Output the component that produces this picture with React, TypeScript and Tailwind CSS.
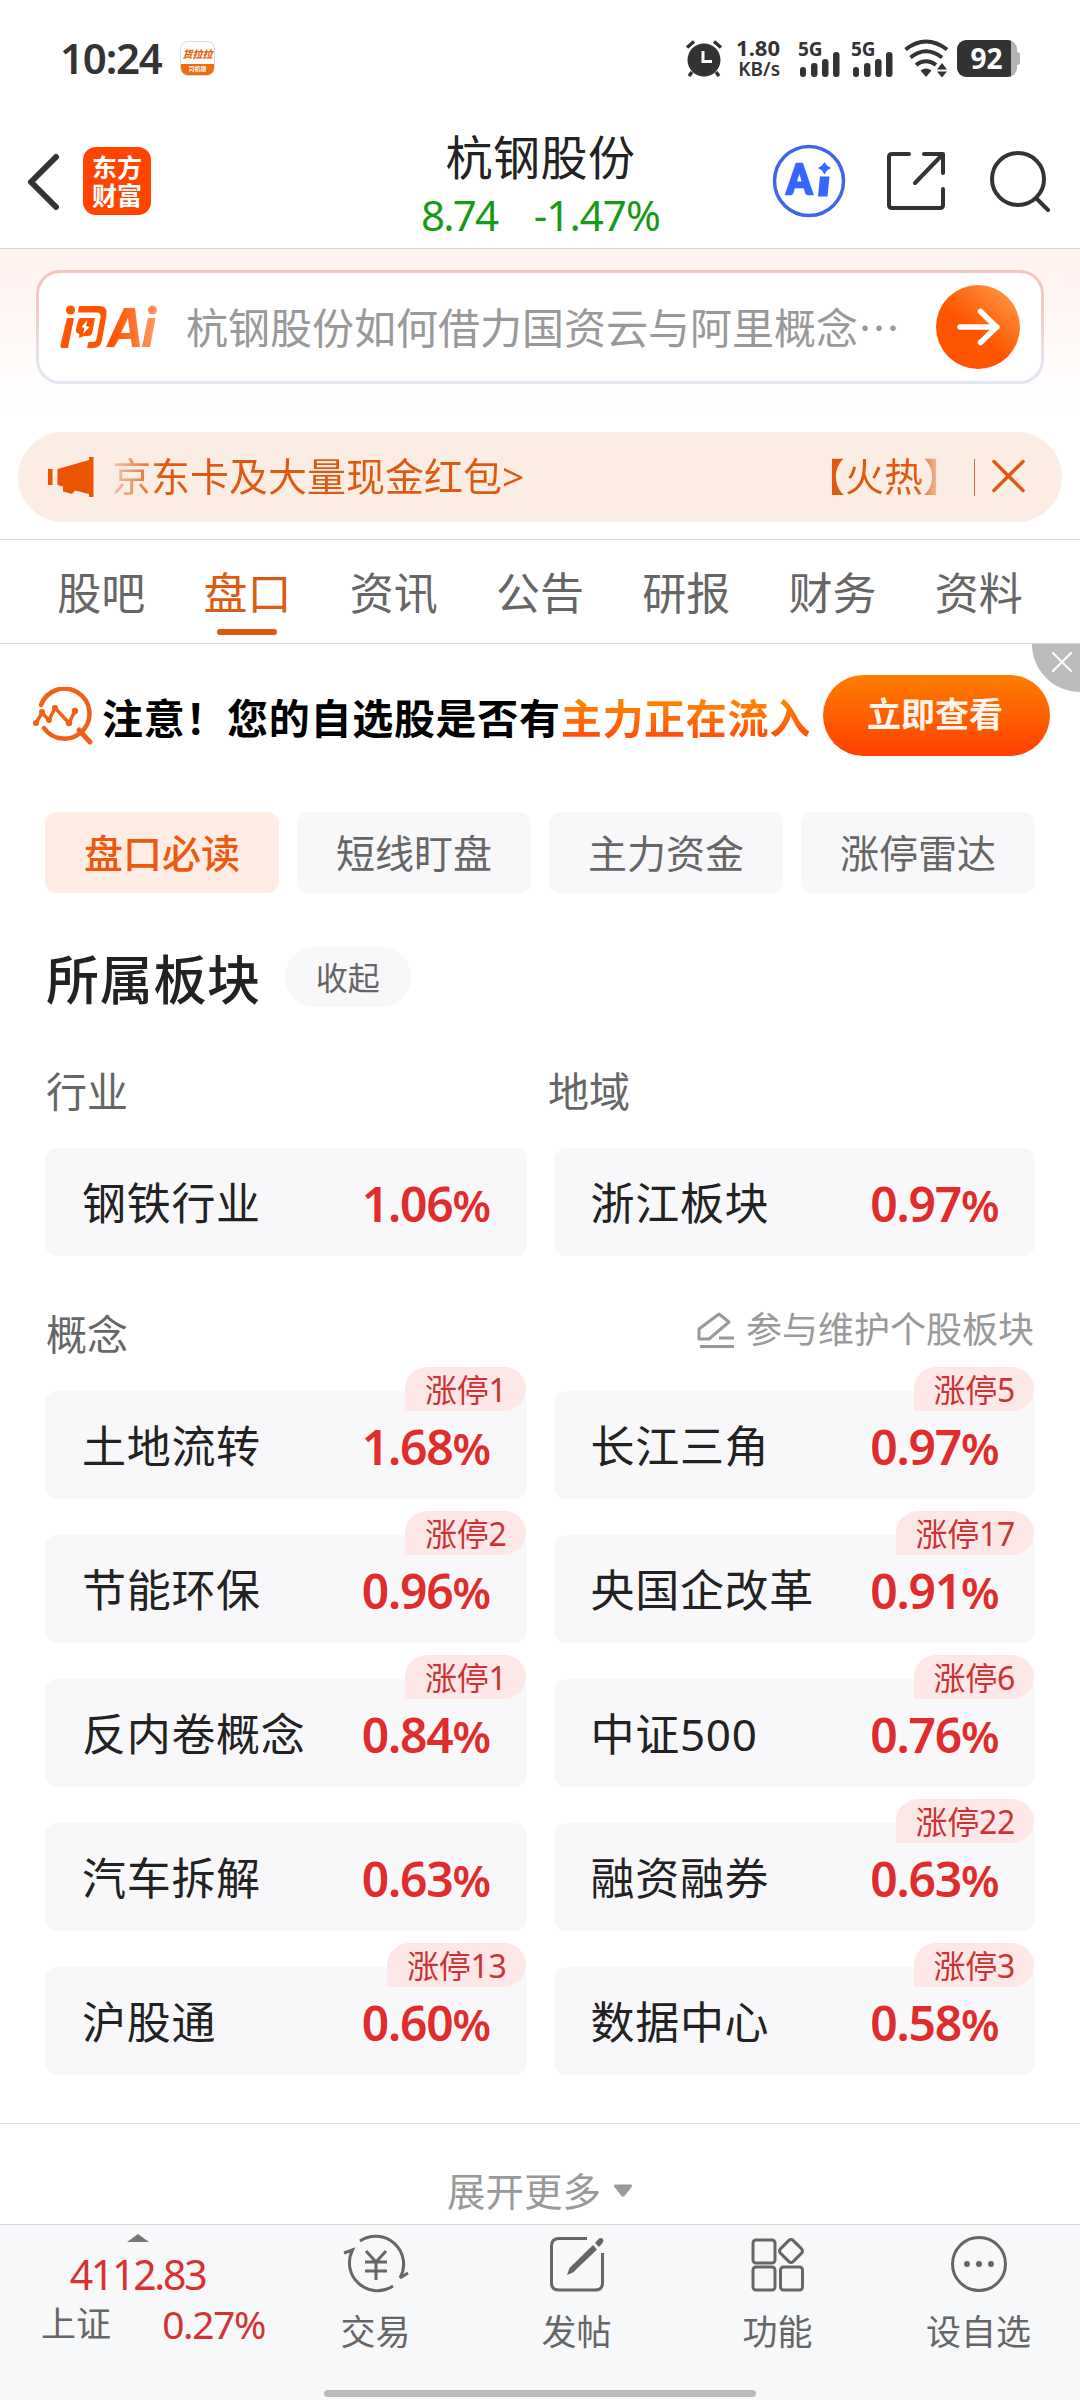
import React from 'react';

interface Sector {
  name: string;
  change: string;
  limitUp?: number;
}

const TABS = ['股吧', '盘口', '资讯', '公告', '研报', '财务', '资料'];
const CHIPS = ['盘口必读', '短线盯盘', '主力资金', '涨停雷达'];

const CONCEPTS: Sector[] = [
  { name: '土地流转', change: '1.68', limitUp: 1 },
  { name: '长江三角', change: '0.97', limitUp: 5 },
  { name: '节能环保', change: '0.96', limitUp: 2 },
  { name: '央国企改革', change: '0.91', limitUp: 17 },
  { name: '反内卷概念', change: '0.84', limitUp: 1 },
  { name: '中证500', change: '0.76', limitUp: 6 },
  { name: '汽车拆解', change: '0.63' },
  { name: '融资融券', change: '0.63', limitUp: 22 },
  { name: '沪股通', change: '0.60', limitUp: 13 },
  { name: '数据中心', change: '0.58', limitUp: 3 },
];

const Signal: React.FC = () => (
  <div className="relative h-[37px] w-[43px]">
    <span className="absolute left-0 top-0 text-[19px] leading-[19px] font-bold">5G</span>
    <svg className="absolute left-0 top-0" width="43" height="37" viewBox="0 0 43 37" fill="#333">
      <rect x="2" y="27" width="6" height="10" rx="3" />
      <rect x="13" y="23" width="6.5" height="14" rx="3" />
      <rect x="24" y="19" width="6.5" height="18" rx="3" />
      <rect x="35" y="12" width="6.5" height="25" rx="3" />
    </svg>
  </div>
);

const StatusBar: React.FC = () => (
  <div className="flex h-[116px] items-center pl-[60px] pr-[60px] text-[#333]">
    <span className="w-[120px] text-[42px] leading-none font-semibold tracking-[-1.2px]">10:24</span>
    <div className="flex h-[35px] w-[35px] flex-col overflow-hidden rounded-[8px] border border-[#ddd] bg-white text-center">
      <span className="mt-[7px] text-[10px] leading-[11px] font-black italic text-[#e8640c] whitespace-nowrap">货拉拉</span>
      <span className="mt-auto h-[11px] bg-[#f26a0a] text-[6px] leading-[10px] font-bold text-white">司机版</span>
    </div>
    <div className="ml-auto flex items-center">
      <svg width="38" height="38" viewBox="0 0 38 38" fill="none">
        <circle cx="19" cy="21" r="16.5" fill="#333" />
        <path d="M2 8.500l7-6M36 8.500l-7-6" stroke="#333" strokeWidth="3.500" />
        <path d="M7 33l-3 4M31 33l3 4" stroke="#333" strokeWidth="3.500" />
        <path d="M18 12v10.500h9" stroke="#fff" strokeWidth="3" />
      </svg>
      <div className="ml-[11px] w-[46px] text-right">
        <div className="text-[22px] leading-[21px] font-bold">1.80</div>
        <div className="text-[19px] leading-[22px] font-semibold">KB/s</div>
      </div>
      <div className="ml-[18px] flex gap-[10px]">
        <Signal />
        <Signal />
      </div>
      <svg className="ml-[10px]" width="46" height="38" viewBox="0 0 46 38" fill="none" stroke="#333" strokeWidth="4">
        <path d="M1.500 10.500Q22 -5.500 43 10.500" />
        <path d="M6.500 18.500Q22 6 38 18.500" />
        <path d="M12 26Q22 18.500 32 26" />
        <path d="M16.500 31.500Q22 27.500 27.500 31.500L22 38Z" fill="#333" stroke="none" />
        <path d="M38 24l5 6.500H33zM38 38.500l5-6H33z" fill="#333" stroke="none" />
      </svg>
      <div className="ml-[7px] flex items-center">
        <div className="flex h-[37px] w-[60px] items-center justify-center rounded-[9px] bg-[linear-gradient(90deg,#333_54px,#b3b3b3_54px)] pb-px pr-px text-[28px] leading-none font-bold text-white">92</div>
        <div className="h-[13px] w-[3px] rounded-r-[3px] bg-[#b3b3b3]" />
      </div>
    </div>
  </div>
);

const Header: React.FC = () => (
  <div className="flex h-[133px] items-start border-b border-[#d6d6d6]">
    <div className="flex w-[421px] items-center pl-[25px] pt-[31px]">
      <svg width="36" height="60" viewBox="0 0 36 60" fill="none" stroke="#333" strokeWidth="6" strokeLinecap="round" strokeLinejoin="round">
        <path d="M31 6L6 31l25 25" />
      </svg>
      <div className="ml-[22px] flex h-[68px] w-[68px] items-center justify-center rounded-[13px] bg-[#ff4400] text-center text-[25px] leading-[28px] font-bold text-white">
        <span>
          东方
          <br />
          财富
        </span>
      </div>
    </div>
    <div className="flex w-[239px] flex-col items-center pt-[16px]">
      <h1 className="text-[47px] leading-[50px] text-[#222] tracking-[0.5px]">杭钢股份</h1>
      <div className="mt-[8px] flex w-full justify-between text-[42px] leading-[50px] text-[#189a16]">
        <span className="tracking-[-1.800px]">8.74</span>
        <span className="tracking-[-0.900px]">-1.47%</span>
      </div>
    </div>
    <div className="ml-auto flex items-center pr-[29px] pt-[28px]">
      <svg width="74" height="74" viewBox="0 0 74 74">
        <circle cx="37" cy="37" r="34.500" fill="#fff" stroke="#3f66e8" strokeWidth="3.500" />
        <text x="13" y="50" fontSize="41" fontWeight="900" fill="#3566ff" stroke="#3566ff" strokeWidth="2.500" fontFamily="Lato, sans-serif" transform="translate(3 0) scale(0.880 1)">A</text>
        <path d="M48 32.500h9.500l-2 20h-9.500z" fill="#3566ff" />
        <path d="M52.500 18l2.500 3.500 4 2.500-4 2.500-2.500 4-2.500-4-4-2.500 4-2.500z" fill="#3566ff" />
      </svg>
      <svg className="ml-[41px]" width="60" height="60" viewBox="0 0 60 60" fill="none" stroke="#333" strokeWidth="4" strokeLinecap="round" strokeLinejoin="round">
        <path d="M22 3H5Q2 3 2 6V54Q2 57 5 57H53Q56 57 56 54V38M37 3H56V22M56 3L28 32" />
      </svg>
      <svg className="ml-[42px]" width="62" height="62" viewBox="0 0 62 62" fill="none" stroke="#333" strokeWidth="4" strokeLinecap="round">
        <circle cx="29" cy="29" r="26" />
        <path d="M47 48l12 12" />
      </svg>
    </div>
  </div>
);

const AskAi: React.FC = () => (
  <div className="h-[183px] bg-[linear-gradient(180deg,#fff2ee_0,#fff_165px)] px-[36px] pt-[21px]">
    <div className="h-[114px] rounded-[24px] bg-[linear-gradient(180deg,#f3c6bd_0%,#f0cfc9_40%,#e0e7f0_85%)] p-[3px]">
      <div className="flex h-full items-center rounded-[21px] bg-white pl-[21px] pr-[21px]">
        <svg width="98" height="44" viewBox="0 0 98 44">
          <defs>
            <linearGradient id="ask" x1="0" y1="0" x2="98" y2="0" gradientUnits="userSpaceOnUse">
              <stop offset="0.550" stopColor="#ff5500" />
              <stop offset="1" stopColor="#ff9a66" />
            </linearGradient>
          </defs>
          <g fill="url(#ask)">
            <circle cx="10.500" cy="5" r="4.500" />
            <path d="M7 13h7L8 43H2Q0 43 0.500 40z" />
            <path d="M19 1H39Q48 1 46.500 10L42 35Q40.500 43 33 43H27L28.500 37H33Q36 37 36.500 34L40.500 12Q41 7.500 37 7.500H18z" />
            <path d="M21 13H35L32 29Q31 31 28 31H24L19 33L19.500 29Q15 28 16 24L18 16Q19 13 21 13z" />
            <path d="M64 3H75L80 42H72L71 34H59L54 42H46zM68 13L61 28H70z" fillRule="evenodd" />
            <circle cx="92.500" cy="5" r="4.500" />
            <path d="M88 13h7.500L90 42h-8z" />
          </g>
          <path d="M27.500 15l-6 7 3 1-1.500 6 6.500-7-3.500-1z" fill="#fff" />
        </svg>
        <span className="ml-[28px] whitespace-nowrap text-[42px] leading-none text-[#999]">
          杭钢股份如何借力国资云与阿里概念<span className="font-['Noto_Sans_CJK_SC']">…</span>
        </span>
        <div className="ml-auto flex h-[84px] w-[84px] shrink-0 items-center justify-center rounded-full bg-[linear-gradient(40deg,#ff5500_45%,#ff9440_90%)]">
          <svg width="44" height="40" viewBox="0 0 44 40" fill="none" stroke="#fff" strokeWidth="5.500" strokeLinecap="round" strokeLinejoin="round">
            <path d="M4 20H41M24.500 4.500L40.500 20L24.500 35.500" />
          </svg>
        </div>
      </div>
    </div>
  </div>
);

const Notice: React.FC = () => (
  <div className="mx-[18px] flex h-[90px] items-center rounded-full bg-[#fcede4] pl-[30px] text-[39px] leading-none text-[#dd5a12]">
    <svg width="46" height="40" viewBox="0 0 46 40" fill="#ea5504">
      <path d="M0 12h4.500v16H0zM9.500 12L41 3V0h4.500v40H41V37L27 33.500L24 37L15 34.500V29.500L9.500 28z" />
    </svg>
    <span className="ml-[18px] mb-[3px] bg-[linear-gradient(90deg,#f2c5aa,#dd5a12_50px)] bg-clip-text py-1 text-transparent whitespace-nowrap">
      京东卡及大量现金红包&gt;
    </span>
    <span className="ml-auto mb-[3px] bg-[linear-gradient(90deg,#dd5a12_110px,#f3bd9f_132px)] bg-clip-text py-1 text-transparent">【火热】</span>
    <div className="ml-[12px] h-[37px] w-px bg-[#c9703f]" />
    <svg className="ml-[17px] mr-[37px] -mt-[2px]" width="33" height="34" viewBox="0 0 34 34" stroke="#dd5a12" strokeWidth="3.500" strokeLinecap="round">
      <path d="M2 2l30 30M32 2L2 32" />
    </svg>
  </div>
);

const Tabs: React.FC = () => (
  <div className="mt-[17px] flex h-[105px] border-y border-[#d6d6d6] px-[28px]">
    {TABS.map((tab) =>
      tab === '盘口' ? (
        <div key={tab} className="flex flex-1 flex-col items-center pt-[30px] text-[44px] leading-[46px] text-[#dd5a12]">
          {tab}
          <div className="mt-[13px] h-[6px] w-[60px] rounded-full bg-[#dd5a12]" />
        </div>
      ) : (
        <div key={tab} className="flex-1 pt-[30px] text-center text-[44px] leading-[46px] text-[#666]">
          {tab}
        </div>
      )
    )}
  </div>
);

const Promo: React.FC = () => (
  <div className="relative flex h-[168px] items-start pl-[32px]">
    <svg className="mt-[43px]" width="62" height="60" viewBox="0 0 62 60" fill="none" stroke="#f26018" strokeWidth="4.500">
      <path d="M9 18A25 25 0 1 1 12 41" strokeLinecap="round" />
      <path d="M47 43l11 12" strokeWidth="5" strokeLinecap="round" />
      <path d="M4 36l6-10 7 7 6-12 14 15 6-12" strokeWidth="3.500" strokeLinejoin="round" />
      <g fill="#f26018" stroke="none">
        <circle cx="4" cy="36" r="3" />
        <circle cx="43" cy="24" r="3.200" />
        <circle cx="37" cy="36" r="3.200" />
        <circle cx="17" cy="33" r="3" />
        <circle cx="23" cy="21" r="3" />
        <circle cx="10" cy="25" r="3" />
      </g>
    </svg>
    <p className="ml-[8px] mt-[51px] whitespace-nowrap text-[41px] leading-[46px] font-bold text-black tracking-[0.700px]">
      注意！您的自选股是否有
      <span className="bg-[linear-gradient(180deg,#ff8a00_15%,#ff4e0c_85%)] bg-clip-text text-transparent">主力正在流入</span>
    </p>
    <button className="absolute left-[823px] top-[31px] h-[81px] w-[227px] rounded-full bg-[linear-gradient(180deg,#ff7e00,#ff4000)] pb-[3px] pr-[3px] text-[34px] leading-none font-bold text-[#fff5ec]">
      立即查看
    </button>
    <div className="absolute right-0 top-0 h-[48px] w-[48px] rounded-bl-[48px] bg-[#bcbcbc]">
      <svg className="ml-[20px] mt-[8px]" width="20" height="20" viewBox="0 0 20 20" stroke="#fff" strokeWidth="2">
        <path d="M0 0l20 20M20 0L0 20" />
      </svg>
    </div>
  </div>
);

const SectorCard: React.FC<{ sector: Sector }> = ({ sector }) => (
  <div className="relative flex h-[108px] items-center justify-between rounded-[12px] bg-[#f8f8fa] pl-[37px] pr-[36px] pt-[2px]">
    <span className="text-[44px] leading-none text-[#222] tracking-[0.700px]">{sector.name}</span>
    <span className="pt-[2px] text-[48px] leading-none font-semibold text-[#df2c2c] tracking-[-1.200px]">
      {sector.change}
      <span className="text-[44px] tracking-[-0.500px]">%</span>
    </span>
    {sector.limitUp && (
      <span className="absolute -top-[24px] right-[1px] flex h-[44px] items-center rounded-[22px] rounded-bl-none bg-[#fde8e7] pl-[20px] pr-[19px] pt-[2px] text-[32px] leading-none text-[#cc3333] tracking-[-0.300px]">
        涨停{sector.limitUp}
      </span>
    )}
  </div>
);

const TradeIcon: React.FC = () => (
  <svg width="66" height="60" viewBox="0 0 66 60" fill="none" stroke="#666" strokeWidth="3">
    <path d="M17 7A28 28 0 0 1 57 44M1 19l8.500-3A28 28 0 0 0 50 52M57 44l8-5" />
    <path d="M23 17l10 11 10-11M22 28h22M22 37h22M33 28v18" />
  </svg>
);

const PostIcon: React.FC = () => (
  <svg width="56" height="60" viewBox="0 0 56 60" fill="none" stroke="#666" strokeWidth="3">
    <path d="M38 4.500H10Q2.500 4.500 2.500 12V49Q2.500 56 10 56H46Q53.500 56 53.500 49V19" />
    <path d="M44 11l4 4.500L24 38.500l-6 2.500 2.500-7zM46 9l4-4.500Q53 3 54.500 6 55 8 50 13z" fill="#666" stroke="none" />
  </svg>
);

const FeatureIcon: React.FC = () => (
  <svg width="54" height="60" viewBox="0 0 54 60" fill="none" stroke="#666" strokeWidth="3">
    <rect x="2" y="6" width="22" height="23" rx="3" />
    <rect x="2" y="33" width="22" height="23" rx="3" />
    <rect x="29.500" y="33" width="22" height="23" rx="3" />
    <rect x="31" y="8" width="18" height="18" rx="3" transform="rotate(45 40 17)" />
  </svg>
);

const MoreIcon: React.FC = () => (
  <svg width="58" height="60" viewBox="0 0 58 60" fill="#666">
    <circle cx="29" cy="30" r="26.500" fill="none" stroke="#666" strokeWidth="3" />
    <circle cx="17" cy="30" r="3" />
    <circle cx="29" cy="30" r="3" />
    <circle cx="41" cy="30" r="3" />
  </svg>
);

const NAV = [
  { label: '交易', icon: <TradeIcon /> },
  { label: '发帖', icon: <PostIcon /> },
  { label: '功能', icon: <FeatureIcon /> },
  { label: '设自选', icon: <MoreIcon /> },
];

const BottomBar: React.FC = () => (
  <div className="flex h-[176px] flex-col border-t border-[#d3d5d8] bg-[#f7f8fa]">
    <div className="flex">
      <div className="flex w-[275px] flex-col items-center pt-[9px]">
        <svg width="22" height="8" viewBox="0 0 22 8" fill="#777">
          <path d="M11 0l11 8H0z" />
        </svg>
        <div className="mt-[11px] text-[41px] leading-[42px] text-[#d93030] tracking-[-2.300px]">4112.83</div>
        <div className="mt-[9px] flex w-full justify-between pl-[41px] pr-[10px] leading-[40px]">
          <span className="text-[35px] text-[#666]">上证</span>
          <span className="text-[39px] text-[#d03434] tracking-[-1.400px]">0.27%</span>
        </div>
      </div>
      {NAV.map((item) => (
        <div key={item.label} className="flex w-[201px] flex-col items-center pt-[9px]">
          {item.icon}
          <span className="mt-[19px] text-[35px] leading-[38px] text-[#666]">{item.label}</span>
        </div>
      ))}
    </div>
    <div className="mx-auto mb-[3px] mt-auto h-[7px] w-[432px] rounded-full bg-[#b9bbbd]" />
  </div>
);

export default function App() {
  return (
    <div className="flex h-[2400px] w-[1080px] flex-col overflow-hidden bg-white font-['Noto_Sans','Noto_Sans_CJK_SC',sans-serif]">
      <StatusBar />
      <Header />
      <AskAi />
      <Notice />
      <Tabs />
      <Promo />
      <div className="grid grid-cols-4 gap-[18px] px-[45px]">
        {CHIPS.map((chip, i) => (
          <div
            key={chip}
            className={
              i === 0
                ? 'flex h-[81px] items-center justify-center rounded-[12px] bg-[#ffede5] text-[39px] leading-none font-medium text-[#ea5a10]'
                : 'flex h-[81px] items-center justify-center rounded-[12px] bg-[#f8f8fa] text-[39px] leading-none text-[#666]'
            }
          >
            {chip}
          </div>
        ))}
      </div>
      <div className="mt-[54px] flex h-[60px] items-center px-[46px]">
        <h2 className="pt-[4px] text-[53px] leading-none font-medium text-[#222] tracking-[0.700px]">所属板块</h2>
        <span className="ml-[24px] flex h-[60px] w-[126px] items-center justify-center rounded-full bg-[#f8f8fa] pt-px text-[32px] leading-none text-[#666]">收起</span>
      </div>
      <div className="mt-[63px] grid grid-cols-2 px-[46px] text-[41px] leading-[42px] text-[#666]">
        <span>行业</span>
        <span className="pl-[8px]">地域</span>
      </div>
      <div className="mt-[36px] grid grid-cols-2 gap-x-[27px] px-[45px]">
        <SectorCard sector={{ name: '钢铁行业', change: '1.06' }} />
        <SectorCard sector={{ name: '浙江板块', change: '0.97' }} />
      </div>
      <div className="mt-[56px] flex h-[44px] justify-between px-[46px]">
        <span className="text-[41px] leading-[44px] text-[#666]">概念</span>
        <span className="flex h-[36px] items-center text-[36px] leading-none text-[#999]">
          <svg className="mr-[11px]" width="38" height="38" viewBox="0 0 38 38" fill="none" stroke="#999" strokeWidth="3" strokeLinejoin="round">
            <path d="M2 18L22 3L32 11L12 28H2zM22 27H37M3 35.500H37" />
          </svg>
          参与维护个股板块
        </span>
      </div>
      <div className="mt-[35px] grid grid-cols-2 gap-x-[27px] gap-y-[36px] px-[45px]">
        {CONCEPTS.map((sector) => (
          <SectorCard key={sector.name} sector={sector} />
        ))}
      </div>
      <div className="mt-[48px] flex flex-1 items-center justify-center border-t border-[#e2e2e2] pt-[34px] text-[38.500px] leading-none text-[#999]">
        展开更多
        <svg className="ml-[12px]" width="20" height="14" viewBox="0 0 20 14" fill="#999">
          <path d="M2.500 0.500h15q2.500 0 1 2.500l-7 9q-1.500 1.500-3 0l-7-9q-1.500-2.500 1-2.500z" />
        </svg>
      </div>
      <BottomBar />
    </div>
  );
}
